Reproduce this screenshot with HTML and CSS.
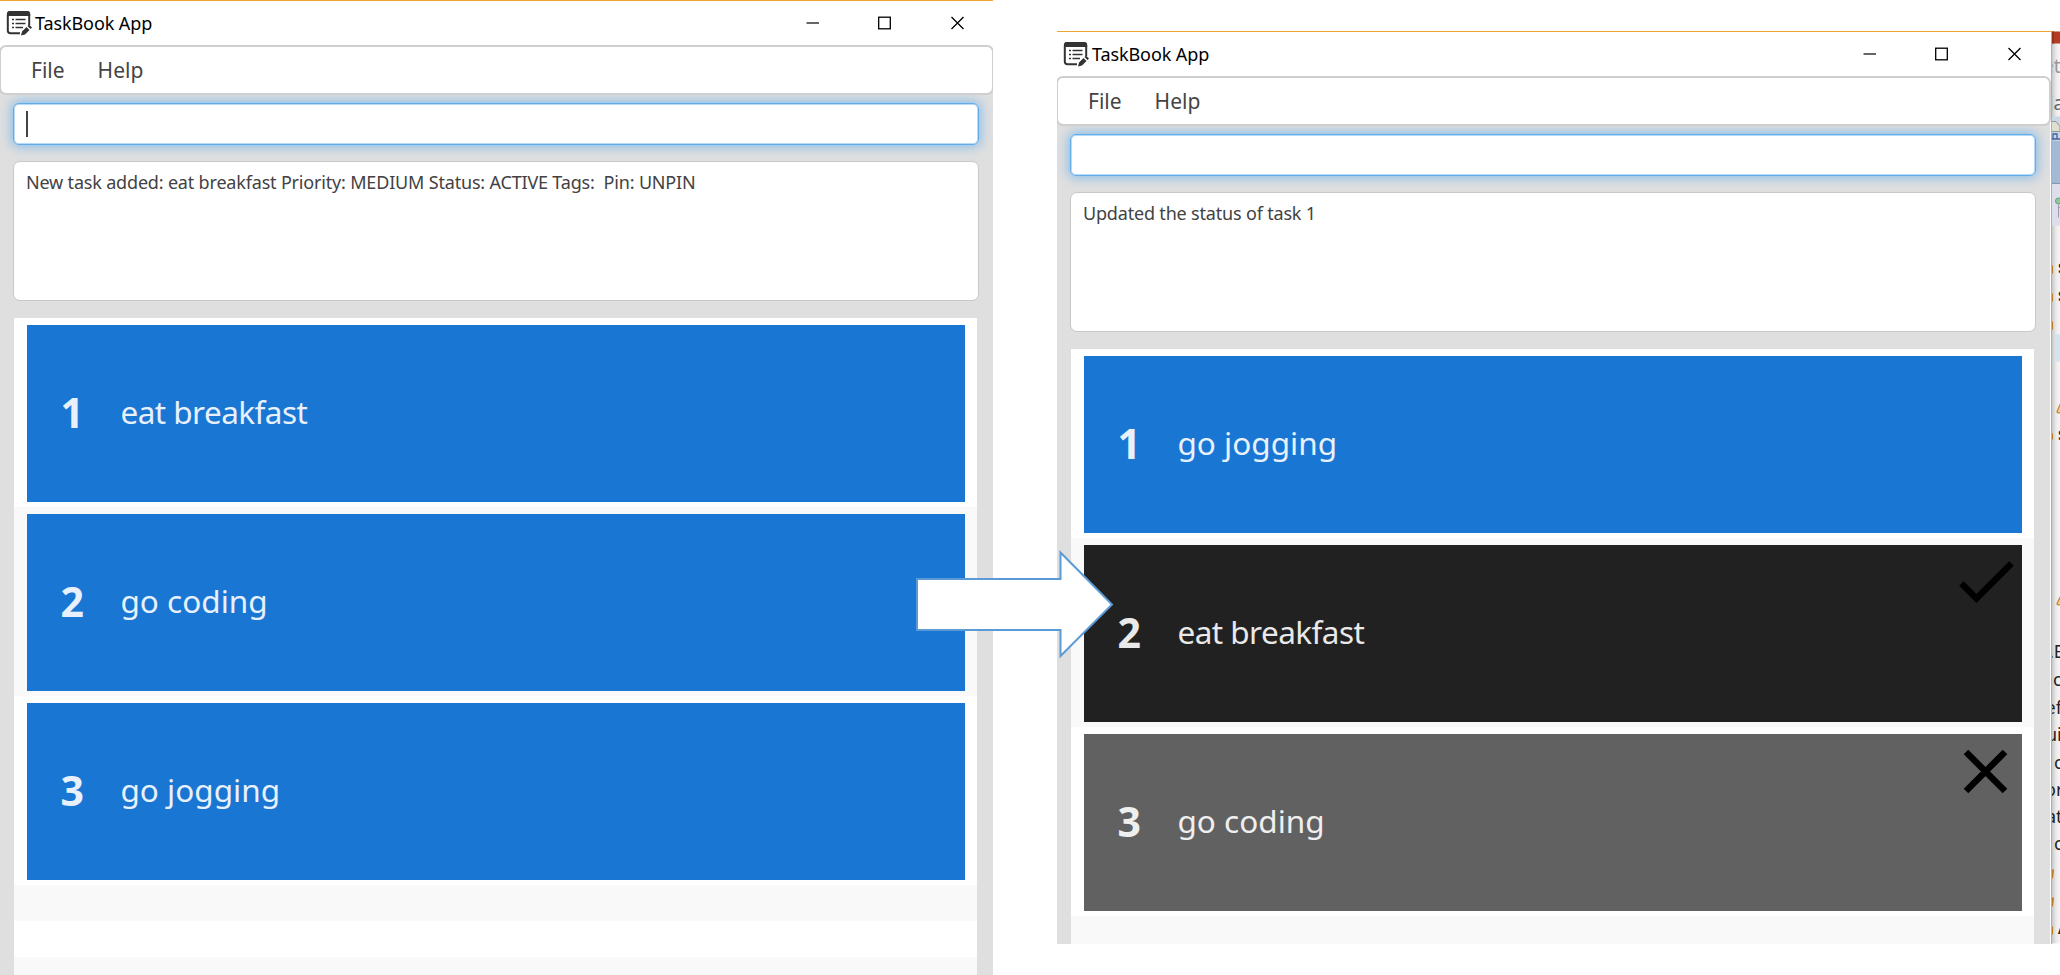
FILE: index.html
```html
<!DOCTYPE html>
<html lang="en">
<head>
<meta charset="utf-8">
<title>TaskBook App</title>
<link rel="stylesheet" href="styles.css">
</head>
<body>
<svg class="defs" width="0" height="0">
  <symbol id="book" viewBox="0 0 26 26">
    <path d="M14 23.200H4.500Q1.800 23.200 1.800 20.500V4.500Q1.800 2 4.500 2H20.500Q23.200 2 23.200 4.500V15" fill="none" stroke="#333" stroke-width="2"/>
    <path d="M1 6V4Q1 1 4 1H21Q24.200 1 24.200 4V6Z" fill="#333"/>
    <path d="M6 9.500H8M6 13.500H8M6 17.500H8M9.500 9.500H19.500M9.500 13.500H19.500M9.500 17.500H17" stroke="#333" stroke-width="1.700"/>
    <path d="M15 25.500L16 21.500L20.500 17L23.500 20L19 24.500ZM21.500 16L23 14.500L26 17.500L24.500 19Z" fill="#333"/>
  </symbol>
  <symbol id="controls" viewBox="0 0 160 14">
    <path d="M0.500 7H13" stroke="#000" stroke-width="1.200"/>
    <rect x="72.700" y="1.200" width="11.600" height="11.600" fill="none" stroke="#000" stroke-width="1.300"/>
    <path d="M145.500 1L157.500 13M157.500 1L145.500 13" stroke="#000" stroke-width="1.300"/>
  </symbol>
</svg>
<main class="canvas">
  <section class="window before">
    <header class="titlebar"><svg class="logo"><use href="#book"/></svg><span class="title">TaskBook App</span><svg class="controls"><use href="#controls"/></svg></header>
    <nav class="menu"><span>File</span><span>Help</span></nav>
    <div class="body">
      <div class="command"><i class="caret"></i></div>
      <div class="result">New task added: eat breakfast Priority: MEDIUM Status: ACTIVE Tags:&nbsp; Pin: UNPIN</div>
      <div class="list">
        <div class="cell"><div class="card"><b>1</b><span class="tight">eat breakfast</span></div></div>
        <div class="cell alt"><div class="card"><b>2</b><span>go coding</span></div></div>
        <div class="cell"><div class="card"><b>3</b><span>go jogging</span></div></div>
        <div class="blank alt"></div><div class="blank"></div><div class="blank alt"></div>
      </div>
    </div>
  </section>

  <section class="window after">
    <header class="titlebar"><svg class="logo"><use href="#book"/></svg><span class="title">TaskBook App</span><svg class="controls"><use href="#controls"/></svg></header>
    <nav class="menu"><span>File</span><span>Help</span></nav>
    <div class="body">
      <div class="command"></div>
      <div class="result">Updated the status of task 1</div>
      <div class="list">
        <div class="cell"><div class="card"><b>1</b><span>go jogging</span></div></div>
        <div class="cell alt"><div class="card done"><b>2</b><span class="tight">eat breakfast</span>
          <svg class="mark" viewBox="0 0 60 50"><path d="M4.500 22.500L19.500 37.500L54.500 2.500" fill="none" stroke="#000" stroke-width="6.500"/></svg></div></div>
        <div class="cell"><div class="card expired"><b>3</b><span>go coding</span>
          <svg class="mark" viewBox="0 0 60 50"><path d="M9 2L48 41M48 2L9 41" fill="none" stroke="#000" stroke-width="6.500"/></svg></div></div>
        <div class="blank alt"></div>
      </div>
    </div>
  </section>

  <svg class="backdrop" viewBox="2052 31 8 912">
    <defs><linearGradient id="shade"><stop offset="0" stop-color="#c8c8c8"/><stop offset=".5" stop-color="#eaeaea"/><stop offset="1" stop-color="#f6f6f6"/></linearGradient></defs>
    <rect x="2052" y="31" width="8" height="912" fill="url(#shade)"/>
    <rect x="2052" y="31" width="8" height="12" fill="#b43c22"/><rect x="2052" y="31" width="2" height="12" fill="#94331f"/>
    <rect x="2052" y="116" width="8" height="23" fill="#c9d7e8"/>
    <path d="M2052 121L2056 121L2060 126V131H2052" fill="#dedfd0" stroke="#8d998f"/>
    <path d="M2052 138.500H2060M2053 138V133.500H2057V138" fill="none" stroke="#3f629c" stroke-width="1.300"/>
    <rect x="2052" y="140" width="8" height="42" fill="#a3bad6"/>
    <rect x="2052" y="182" width="8" height="1.500" fill="#8398b4"/>
    <rect x="2052" y="183.500" width="8" height="41.500" fill="#dcdeeb"/>
    <path d="M2058.500 204V217M2058.500 207H2060" stroke="#9c9caf"/><circle cx="2058.500" cy="200.500" r="3" fill="#91c7a0" stroke="#66a177"/>
    <rect x="2055" y="334" width="5" height="27" fill="#d2e3f1"/>
    <g fill="#b97b27"><path d="M2052 265H2053V273H2052ZM2052 293H2053V301H2052ZM2052 321H2053V329H2052ZM2052 433H2053V439H2052ZM2052 869H2054L2053 878H2052ZM2052 897H2054L2053 906H2052ZM2052 926H2053V934H2052Z"/></g>
    <path d="M2061 402L2057 411Q2057 413 2061 412M2061 595L2057 603Q2057 605 2061 604" fill="#efd196" stroke="#c98b2d" stroke-width="1.300"/>
    <text class="gray" x="2043" y="72">et</text>
    <text class="gray dark" x="2048.500" y="109">la</text>
    <g class="bold"><text x="2058" y="272">s</text><text x="2058" y="300">s</text><text x="2058" y="439">s</text><text x="2058" y="933">A</text></g>
    <g class="doc"><text x="2049" y="657">.E</text><text x="2053" y="685">c</text><text x="2045.500" y="713">ef</text><text x="2046" y="740">ui</text><text x="2054" y="768">c</text><text x="2045" y="795">or</text><text x="2046" y="822">at</text><text x="2054" y="849">c</text></g>
  </svg>

  <svg class="arrow" viewBox="916 550 200 110"><path d="M917 579H1060.500V552.500L1112 604.500L1060.500 656V630H917Z" fill="#fff" stroke="#5b9bd5" stroke-width="2"/></svg>
</main>
</body>
</html>
```
FILE: styles.css
```css
* { box-sizing: border-box; }
body { margin: 0; background: #fff; font-family: "Noto Sans", "Open Sans", sans-serif; }
.defs { position: absolute; }
.canvas { position: relative; width: 2060px; height: 975px; overflow: hidden; background: #fff; }

.window { position: absolute; display: flex; flex-direction: column; overflow: hidden; background: #fff; border-top: 1px solid #f0a532; }
.before { left: 0; top: 0; width: 993px; height: 975px; }
.after { left: 1057px; top: 31px; width: 995px; height: 913px; border-right: 1px solid #e8a93f; }

.titlebar { display: flex; align-items: center; flex: none; width: 993px; height: 44px; padding: 0 29px 0 6px; }
.logo { width: 26px; height: 26px; }
.title { margin-left: 3px; font-size: 18px; letter-spacing: -.1px; line-height: 24px; color: #000; }
.controls { width: 160px; height: 14px; margin-left: auto; margin-right: -2px; }

.menu { position: relative; display: flex; flex: none; gap: 33px; width: 995px; height: 50px; margin-left: -1px; padding: 8px 0 0 30px; background: #fff; border: 2px solid #cfcfcf; border-radius: 7px; font-size: 21px; line-height: 31px; color: #444; z-index: 1; }
.body { flex: 1; width: 993px; margin-top: -5px; padding: 13px 15px 0 13px; background: #dfdfdf; }

.command { width: 966px; height: 42px; padding: 7px 12px; background: #fff; border: 1px solid #62aeea; border-radius: 6px; box-shadow: inset 0 0 0 1px #b5dafa, 0 0 11px 2px rgba(93, 172, 236, .65); }
.caret { display: block; width: 2px; height: 26px; background: #444; }
.result { width: 966px; height: 140px; margin-top: 16px; padding: 7px 12px; background: #fff; border: 1px solid #c8c8c8; border-radius: 7px; font-size: 18px; letter-spacing: -.18px; line-height: 26px; color: #424242; white-space: nowrap; }

.list { width: 963px; margin: 17px 0 0 1px; background: #fff; }
.cell { height: 189px; padding: 6.500px 12px 5.500px 12.500px; background: #fff; }
.blank { height: 36px; background: #fff; }
.cell.alt, .blank.alt { background: #f9f9f9; }
.card { position: relative; display: flex; align-items: center; height: 177px; padding-left: 34px; background: #1976d3; color: #e8f1fb; }
.card b { width: 60px; font-size: 41px; line-height: 60px; margin-top: -2px; }
.card span { font-size: 31.500px; line-height: 48px; margin-top: -2px; }
.card .tight { letter-spacing: -.55px; }
.card.done { background: #212121; color: #e9e9e9; }
.card.expired { background: #616161; color: #efefef; }
.mark { position: absolute; right: 5px; top: 16px; width: 60px; height: 50px; }

.backdrop { position: absolute; left: 2052px; top: 31px; width: 8px; height: 913px; overflow: hidden; }
.gray { font-size: 19px; fill: #999; }
.gray.dark { fill: #666; }
.bold { font-size: 17px; font-weight: 700; fill: #222; }
.doc { font-size: 18px; fill: #222; }
.arrow { position: absolute; left: 916px; top: 550px; width: 200px; height: 110px; }
```
